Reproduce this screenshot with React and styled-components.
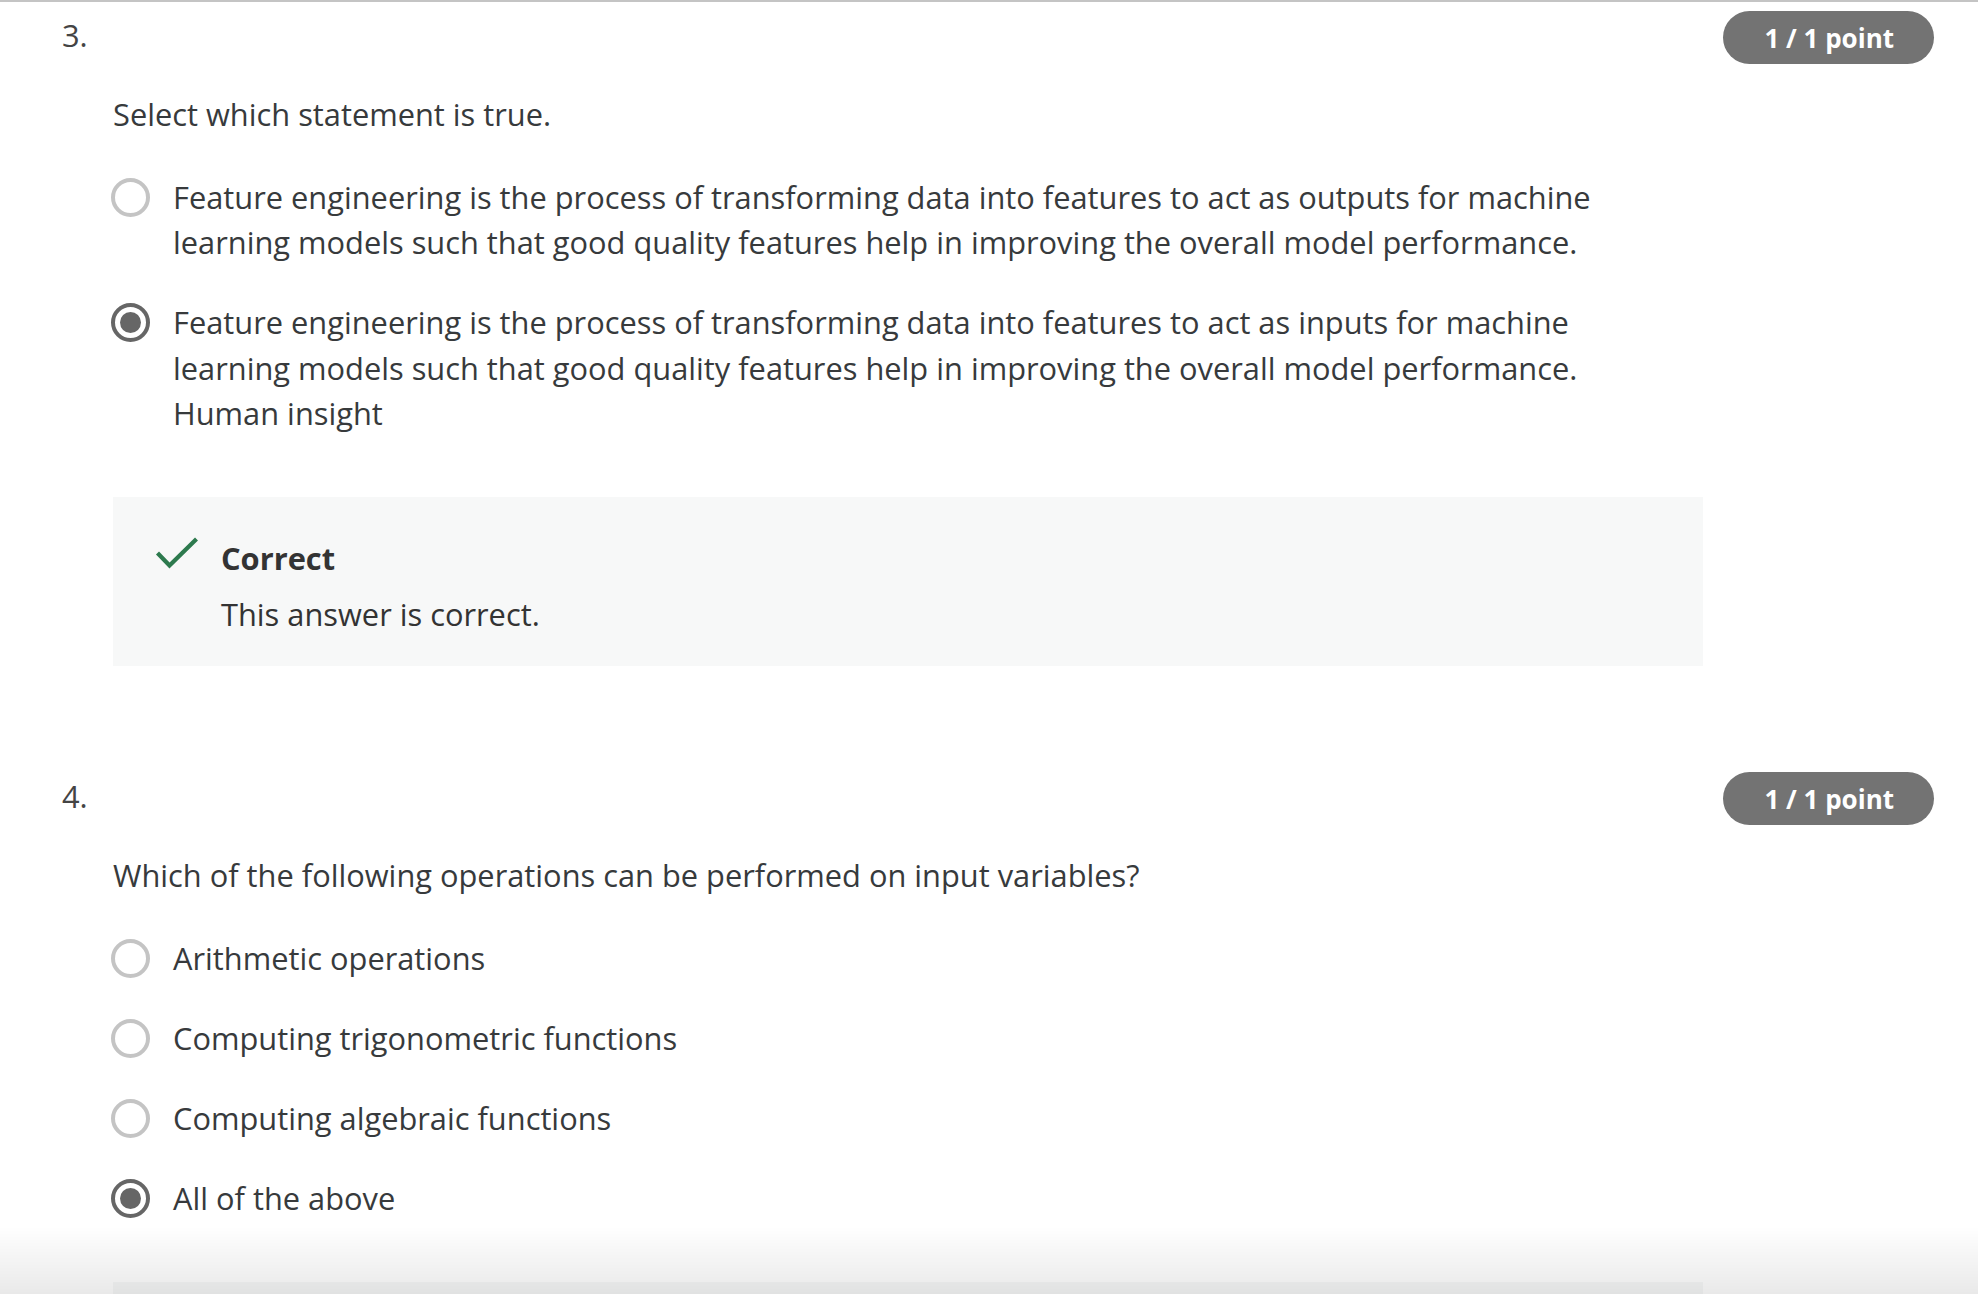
import React from "react";
import styled, { createGlobalStyle } from "styled-components";

const GlobalStyle = createGlobalStyle`
  html, body {
    margin: 0;
    padding: 0;
    background: #ffffff;
  }
  body {
    font-family: "Open Sans", "Noto Sans", Arial, sans-serif;
    color: #373a3c;
    -webkit-font-smoothing: antialiased;
  }
`;

const Page = styled.main`
  border-top: 2px solid #c4c4c4;
  padding: 9px 44px 0 62px;
`;

const Question = styled.section`
  & + & {
    margin-top: 106px;
  }
`;

const Header = styled.div`
  display: flex;
  justify-content: space-between;
  align-items: center;
  height: 53px;
`;

const Number = styled.span`
  font-size: 30.8px;
  line-height: 1;
  color: #444444;
  margin-top: -4px;
`;

const Pill = styled.span`
  display: inline-flex;
  align-items: center;
  height: 53px;
  padding: 0 40px 0 41px;
  border-radius: 27px;
  background: #737373;
  color: #ffffff;
  font-weight: 700;
  font-size: 26px;
`;

const Body = styled.div`
  margin-left: 51px;
  width: 1590px;
`;

const Prompt = styled.p`
  margin: 28px 0 0;
  font-size: 30.8px;
  line-height: 45.6px;
`;

const Options = styled.div`
  display: flex;
  flex-direction: column;
  gap: 34.5px;
  margin-top: 37px;
`;

const Option = styled.label`
  display: flex;
  align-items: flex-start;
  gap: 23px;
`;

const Radio = styled.span`
  flex: none;
  box-sizing: border-box;
  width: 39px;
  height: 39px;
  margin: 3px 0 0 -2px;
  border-radius: 50%;
  border: 4px solid ${(p) => (p.$checked ? "#666666" : "#c4c4c4")};
  display: flex;
  align-items: center;
  justify-content: center;

  &::after {
    content: "";
    display: ${(p) => (p.$checked ? "block" : "none")};
    width: 21px;
    height: 21px;
    border-radius: 50%;
    background: #666666;
  }
`;

const OptionText = styled.span`
  font-size: 30.8px;
  line-height: 45.6px;
  max-width: 1465px;
`;

const Feedback = styled.div`
  margin-top: 60px;
  background: #f7f8f8;
  padding: 38px 44px 29px;
  display: grid;
  grid-template-columns: 44px 1fr;
  column-gap: 20px;
  row-gap: 10px;
`;

const CheckIcon = styled.svg`
  grid-row: 1;
  grid-column: 1;
  margin: 1px 0 0 -2px;
`;

const FeedbackTitle = styled.div`
  grid-row: 1;
  grid-column: 2;
  font-size: 30.8px;
  line-height: 46px;
  font-weight: 700;
  color: #333333;
`;

const FeedbackText = styled.div`
  grid-row: 2;
  grid-column: 2;
  font-size: 30.8px;
  line-height: 46px;
  color: #333333;
`;

const Fade = styled.div`
  position: fixed;
  left: 0;
  right: 0;
  bottom: 0;
  height: 68px;
  background: linear-gradient(to bottom, rgba(0, 0, 0, 0), rgba(0, 0, 0, 0.085));
  pointer-events: none;
`;

const questions = [
  {
    n: "3.",
    prompt: "Select which statement is true.",
    options: [
      "Feature engineering is the process of transforming data into features to act as outputs for machine learning models such that good quality features help in improving the overall model performance.",
      "Feature engineering is the process of transforming data into features to act as inputs for machine learning models such that good quality features help in improving the overall model performance. Human insight",
    ],
    selected: 1,
  },
  {
    n: "4.",
    prompt: "Which of the following operations can be performed on input variables?",
    options: [
      "Arithmetic operations",
      "Computing trigonometric functions",
      "Computing algebraic functions",
      "All of the above",
    ],
    selected: 3,
  },
];

function Check() {
  return (
    <CheckIcon width="44" height="34" viewBox="0 0 44 34" aria-hidden="true">
      <polyline
        points="2.5,17 14.5,29.5 41.5,3"
        fill="none"
        stroke="#2d7a4e"
        strokeWidth="4.2"
      />
    </CheckIcon>
  );
}

export default function App() {
  return (
    <>
      <GlobalStyle />
      <Page>
        {questions.map((q) => (
          <Question key={q.n}>
            <Header>
              <Number>{q.n}</Number>
              <Pill>1 / 1 point</Pill>
            </Header>
            <Body>
              <Prompt>{q.prompt}</Prompt>
              <Options>
                {q.options.map((o, i) => (
                  <Option key={i}>
                    <Radio $checked={i === q.selected} />
                    <OptionText>{o}</OptionText>
                  </Option>
                ))}
              </Options>
              <Feedback>
                <Check />
                <FeedbackTitle>Correct</FeedbackTitle>
                <FeedbackText>This answer is correct.</FeedbackText>
              </Feedback>
            </Body>
          </Question>
        ))}
      </Page>
      <Fade />
    </>
  );
}
